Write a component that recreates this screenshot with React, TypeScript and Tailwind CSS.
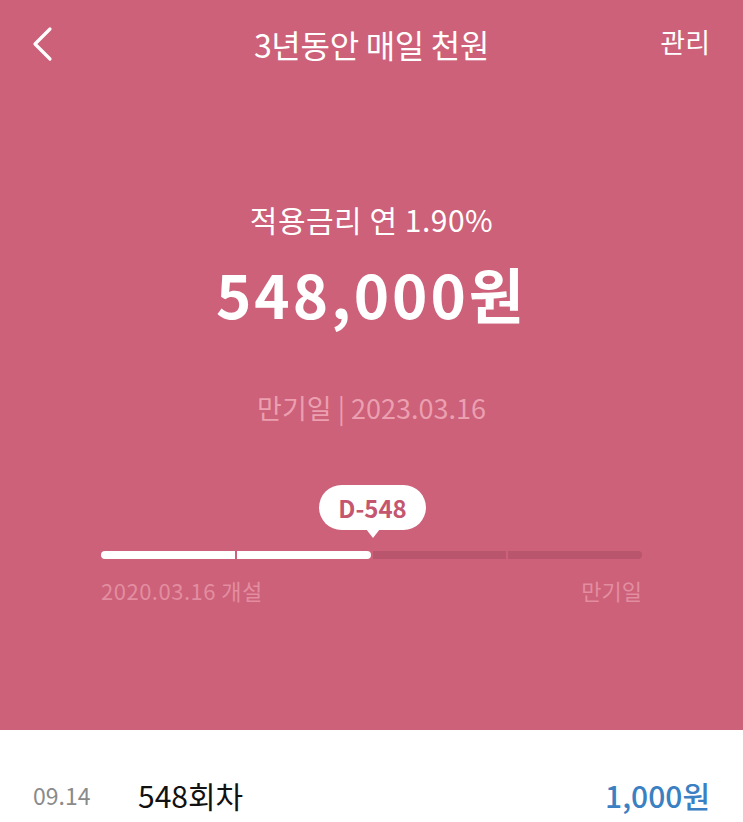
import type React from "react";

// ─── Header ─────────────────────────────────────────────────────────────
const Header: React.FC = () => (
  <div className="relative flex items-center justify-center h-[88px]">
    <button type="button" className="absolute left-[30px] top-[26px] w-[30px] h-[36px] flex items-center">
      <svg width="24" height="36" viewBox="0 0 24 36" fill="none">
        <path d="M20 3 L5 18 L20 33" stroke="white" strokeWidth="3.2" strokeLinecap="round" strokeLinejoin="round" />
      </svg>
    </button>
    <h1 className="text-[32px] text-white font-normal tracking-[-0.3px]">3년동안 매일 천원</h1>
    <span className="absolute right-[33px] top-[22px] text-[27px] text-white">관리</span>
  </div>
);

// ─── Progress bar with D-day bubble ─────────────────────────────────────
const SEGMENTS = 4;
const FILLED = 2;

const Progress: React.FC = () => (
  <div className="px-[101px]">
    <div className="flex justify-center pl-[4px]">
      <div className="relative mr-[2px]">
        <div className="bg-white rounded-full h-[45px] w-[107px] flex items-center justify-center">
          <span className="text-[24px] font-bold text-[#c4566f] leading-none">D-548</span>
        </div>
        <div className="absolute left-1/2 -translate-x-1/2 -bottom-[8px] w-0 h-0 border-l-[7px] border-r-[7px] border-t-[9px] border-l-transparent border-r-transparent border-t-white" />
      </div>
    </div>
    <div className="mt-[21px] flex h-[8px] rounded-full overflow-hidden gap-[2px] bg-[#cc6179]">
      {Array.from({ length: SEGMENTS }).map((_, i) => (
        <div
          key={i}
          className={`flex-1 ${i < FILLED ? "bg-white" : "bg-[#b9556c]"} ${i === FILLED - 1 ? "rounded-r-full" : ""}`}
        />
      ))}
    </div>
    <div className="mt-[20px] flex justify-between text-[22px] leading-none text-[#e38da1]">
      <span className="tracking-[0.5px]">2020.03.16 개설</span>
      <span>만기일</span>
    </div>
  </div>
);

export default function App() {
  return (
    <div
      className="w-[743px] h-[822px] bg-white overflow-hidden"
      style={{ fontFamily: '"Noto Sans CJK KR", "Noto Sans", sans-serif' }}
    >
      <div className="bg-[#cc6179] h-[730px]">
        <Header />
        <div className="flex flex-col items-center pt-[116px]">
          <p className="text-[30px] text-white leading-none tracking-[0.5px]">적용금리 연 1.90%</p>
          <p className="mt-[29px] text-[60px] font-bold text-white leading-none tracking-[3px]">548,000원</p>
          <p className="mt-[71px] text-[27px] text-[#eb9fb0] leading-none">만기일 | 2023.03.16</p>
        </div>
        <div className="mt-[64px]">
          <Progress />
        </div>
      </div>
      <div className="flex items-center h-[130px] px-[33px] leading-none">
        <span className="text-[23px] text-[#8a8a8a] w-[105px]">09.14</span>
        <span className="text-[30px] text-[#111]">548회차</span>
        <span className="ml-auto text-[30px] font-medium text-[#3b80c2]">1,000원</span>
      </div>
    </div>
  );
}
